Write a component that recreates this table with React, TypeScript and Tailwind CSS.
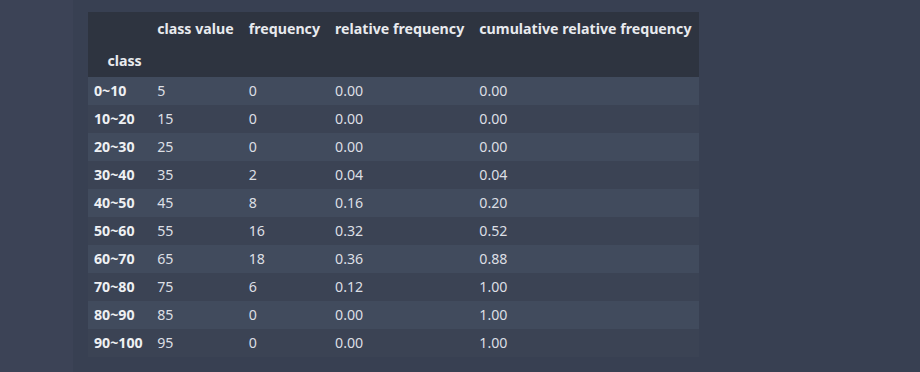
import React from 'react';

const rows = [
  ['0~10', '5', '0', '0.00', '0.00'],
  ['10~20', '15', '0', '0.00', '0.00'],
  ['20~30', '25', '0', '0.00', '0.00'],
  ['30~40', '35', '2', '0.04', '0.04'],
  ['40~50', '45', '8', '0.16', '0.20'],
  ['50~60', '55', '16', '0.32', '0.52'],
  ['60~70', '65', '18', '0.36', '0.88'],
  ['70~80', '75', '6', '0.12', '1.00'],
  ['80~90', '85', '0', '0.00', '1.00'],
  ['90~100', '95', '0', '0.00', '1.00'],
];

const columns = ['class value', 'frequency', 'relative frequency', 'cumulative relative frequency'];

export default function App() {
  return (
    <div
      className="flex w-[920px] h-[372px] bg-[#384052] text-[14.2px]"
      style={{ fontFamily: '"Noto Sans", "Noto Sans CJK KR", sans-serif' }}
    >
      <div className="w-[73px] shrink-0 bg-[#3c4356]" />
      <div className="pl-[15px] pt-[12px]">
        <table className="border-collapse">
          <thead className="bg-[#2e3440] text-[#e8eaee] font-bold">
            <tr className="h-[33px]">
              <th className="pl-[6px] pr-[7px]" />
              {columns.map((c) => (
                <th key={c} className="px-[7.5px] pt-[1px] text-left whitespace-nowrap font-bold">
                  {c}
                </th>
              ))}
            </tr>
            <tr className="h-[32px]">
              <th className="pl-[6px] pr-[8px] text-right font-bold">class</th>
              {columns.map((c) => (
                <th key={c} />
              ))}
            </tr>
          </thead>
          <tbody className="text-[#dcdfe4]">
            {rows.map((r, i) => (
              <tr key={r[0]} className={`h-[28px] ${i % 2 === 0 ? 'bg-[#414b5d]' : 'bg-[#3b4354]'}`}>
                <th className="pl-[6px] pr-[7px] text-left font-bold text-[#eef0f3] whitespace-nowrap">{r[0]}</th>
                {r.slice(1).map((v, j) => (
                  <td key={j} className="px-[7.5px] text-left">
                    {v}
                  </td>
                ))}
              </tr>
            ))}
          </tbody>
        </table>
      </div>
    </div>
  );
}
